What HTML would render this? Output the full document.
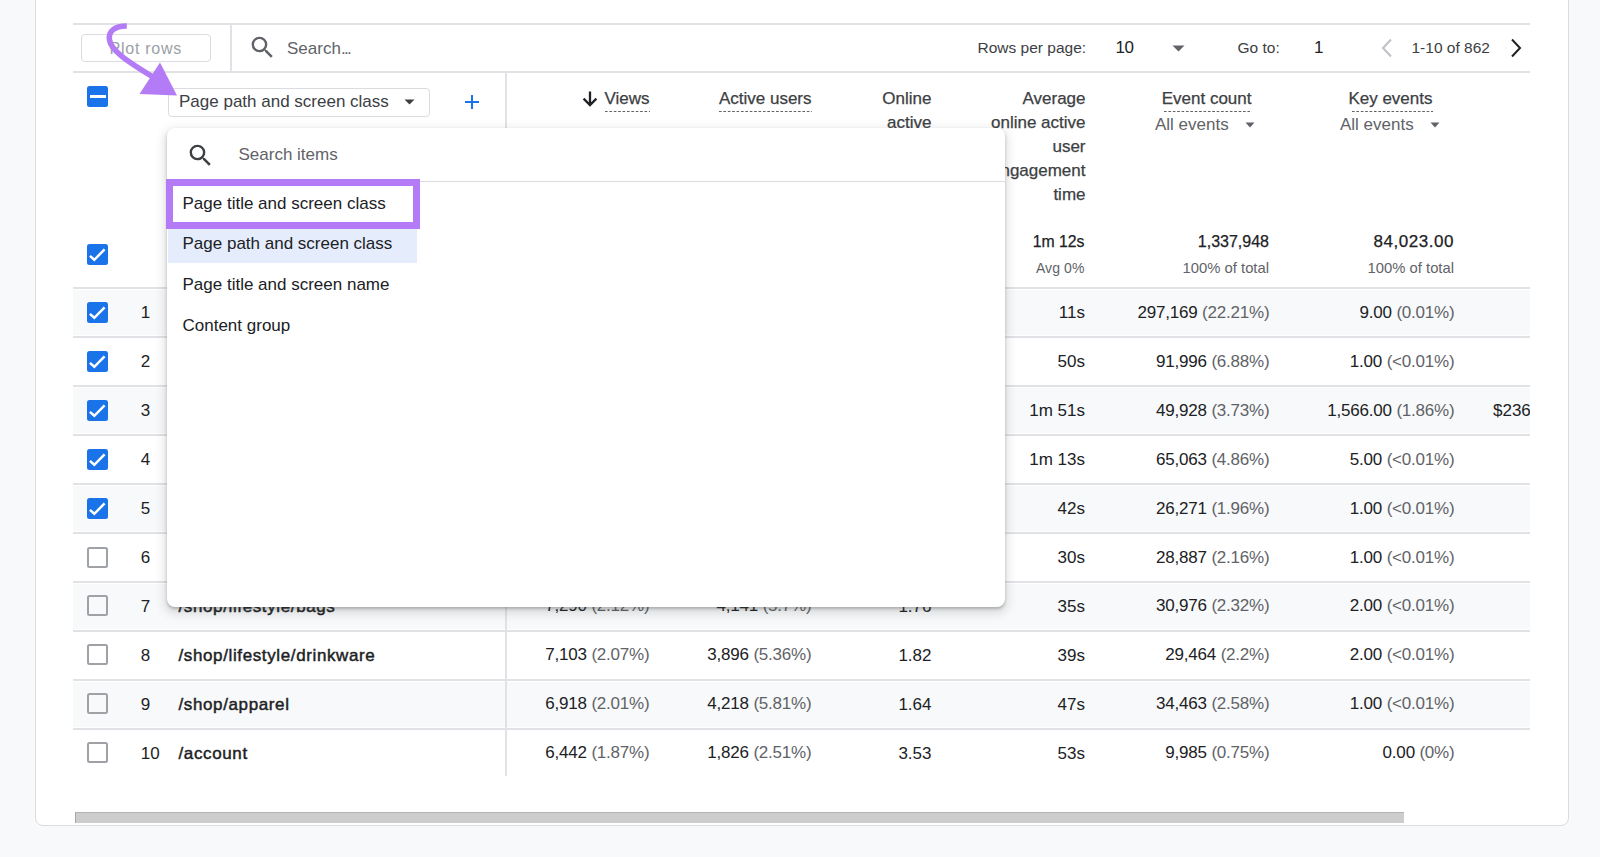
<!DOCTYPE html>
<html><head><meta charset="utf-8"><style>
html,body{margin:0;padding:0;}
body{width:1600px;height:857px;position:relative;overflow:hidden;background:#f8f9fa;font-family:"Liberation Sans", sans-serif;}
.t{position:absolute;white-space:nowrap;}
</style></head><body>
<div style="position:absolute;left:35px;top:-20px;width:1534px;height:846px;box-sizing:border-box;background:#fff;border:1px solid #dadce0;border-radius:8px;"></div>
<div style="position:absolute;left:73px;top:23px;width:1457px;height:2px;background:#e0e2e6;"></div>
<div style="position:absolute;left:73px;top:71px;width:1457px;height:2px;background:#e0e2e6;"></div>
<div style="position:absolute;left:230px;top:25px;width:2px;height:46px;background:#e0e2e6;"></div>
<div style="position:absolute;left:80.5px;top:34px;width:130px;height:28px;box-sizing:border-box;border:1px solid #dadce0;border-radius:4px;"></div>
<div class="t" style="left:109.50px;top:38.96px;font-size:16px;line-height:20px;color:#9aa0a6;font-weight:normal;letter-spacing:0.75px;">Plot rows</div>
<svg style="position:absolute;left:248px;top:33.2px" width="29" height="29" viewBox="0 0 24 24"><path fill="#5f6368" d="M15.5 14h-.79l-.28-.27A6.471 6.471 0 0 0 16 9.5 6.5 6.5 0 1 0 9.5 16c1.61 0 3.09-.59 4.23-1.57l.27.28v.79l5 4.99L20.49 19l-4.99-5zm-6 0C7.01 14 5 11.99 5 9.5S7.01 5 9.5 5 14 7.01 14 9.5 11.99 14 9.5 14z"/></svg>
<div class="t" style="left:287.00px;top:37.61px;font-size:17px;line-height:21px;color:#5f6368;font-weight:normal;">Search<span style="letter-spacing:-1.6px">...</span></div>
<div class="t" style="left:977.50px;top:38.33px;font-size:15.5px;line-height:19px;color:#3c4043;font-weight:normal;">Rows per page:</div>
<div class="t" style="left:1115.50px;top:37.21px;font-size:17px;line-height:21px;color:#202124;font-weight:normal;letter-spacing:-0.4px;">10</div>
<svg style="position:absolute;left:1172px;top:45px" width="13" height="7" viewBox="0 0 13 7"><path d="M0.5 0.5h12L6.5 6.5z" fill="#5f6368"/></svg>
<div class="t" style="left:1237.50px;top:38.33px;font-size:15.5px;line-height:19px;color:#3c4043;font-weight:normal;">Go to:</div>
<div class="t" style="left:1314.00px;top:37.21px;font-size:17px;line-height:21px;color:#202124;font-weight:normal;">1</div>
<svg style="position:absolute;left:1379px;top:38px" width="16" height="20" viewBox="0 0 16 20"><path d="M12 1.5L4 10l8 8.5" fill="none" stroke="#bdc1c6" stroke-width="2"/></svg>
<div class="t" style="left:1411.50px;top:38.33px;font-size:15.5px;line-height:19px;color:#3c4043;font-weight:normal;">1-10 of 862</div>
<svg style="position:absolute;left:1508px;top:38px" width="16" height="20" viewBox="0 0 16 20"><path d="M4 1.5L12 10l-8 8.5" fill="none" stroke="#202124" stroke-width="2"/></svg>
<div style="position:absolute;left:87px;top:86px;width:21px;height:21px;background:#1a73e8;border-radius:2.5px;"></div>
<div style="position:absolute;left:89.5px;top:94.5px;width:16px;height:3px;background:#fff;"></div>
<div style="position:absolute;left:168px;top:88px;width:262px;height:28.5px;box-sizing:border-box;border:1px solid #dadce0;border-radius:4px;background:#fff;"></div>
<div class="t" style="left:179.00px;top:91.21px;font-size:17px;line-height:21px;color:#3c4043;font-weight:normal;">Page path and screen class</div>
<svg style="position:absolute;left:404px;top:99px" width="11" height="6" viewBox="0 0 11 6"><path d="M0.5 0.5h10L5.5 5.5z" fill="#3c4043"/></svg>
<div style="position:absolute;left:465px;top:100.5px;width:14px;height:2px;background:#1a73e8;"></div>
<div style="position:absolute;left:471px;top:94.5px;width:2px;height:14px;background:#1a73e8;"></div>
<div style="position:absolute;left:505px;top:73px;width:2px;height:703px;background:#e0e2e6;"></div>
<svg style="position:absolute;left:581px;top:90px" width="18" height="17" viewBox="0 0 18 17"><path d="M9 1.5V15M2.6 8.6L9 15l6.4-6.4" fill="none" stroke="#202124" stroke-width="2.3"/></svg>
<div class="t" style="right:950.50px;top:87.91px;font-size:17px;line-height:21px;color:#3c4043;font-weight:normal;-webkit-text-stroke:0.25px #3c4043;">Views</div>
<div style="position:absolute;left:604.5px;top:110.5px;width:45.0px;height:1.5px;background-image:linear-gradient(to right,#5f6368 55%,transparent 55%);background-size:4.4px 1.5px;"></div>
<div class="t" style="right:788.50px;top:87.91px;font-size:17px;line-height:21px;color:#3c4043;font-weight:normal;-webkit-text-stroke:0.25px #3c4043;">Active users</div>
<div style="position:absolute;left:719px;top:110.5px;width:92.5px;height:1.5px;background-image:linear-gradient(to right,#5f6368 55%,transparent 55%);background-size:4.4px 1.5px;"></div>
<div class="t" style="right:668.50px;top:87.91px;font-size:17px;line-height:21px;color:#3c4043;font-weight:normal;-webkit-text-stroke:0.25px #3c4043;">Online</div>
<div class="t" style="right:668.50px;top:111.91px;font-size:17px;line-height:21px;color:#3c4043;font-weight:normal;-webkit-text-stroke:0.25px #3c4043;">active</div>
<div class="t" style="right:514.50px;top:87.91px;font-size:17px;line-height:21px;color:#3c4043;font-weight:normal;-webkit-text-stroke:0.25px #3c4043;">Average</div>
<div class="t" style="right:514.50px;top:111.91px;font-size:17px;line-height:21px;color:#3c4043;font-weight:normal;-webkit-text-stroke:0.25px #3c4043;">online active</div>
<div class="t" style="right:514.50px;top:135.91px;font-size:17px;line-height:21px;color:#3c4043;font-weight:normal;-webkit-text-stroke:0.25px #3c4043;">user</div>
<div class="t" style="right:514.50px;top:159.91px;font-size:17px;line-height:21px;color:#3c4043;font-weight:normal;-webkit-text-stroke:0.25px #3c4043;">engagement</div>
<div class="t" style="right:514.50px;top:183.91px;font-size:17px;line-height:21px;color:#3c4043;font-weight:normal;-webkit-text-stroke:0.25px #3c4043;">time</div>
<div class="t" style="right:348.50px;top:87.91px;font-size:17px;line-height:21px;color:#3c4043;font-weight:normal;-webkit-text-stroke:0.25px #3c4043;">Event count</div>
<div style="position:absolute;left:1163.5px;top:110.5px;width:88.0px;height:1.5px;background-image:linear-gradient(to right,#5f6368 55%,transparent 55%);background-size:4.4px 1.5px;"></div>
<div class="t" style="left:1155.00px;top:113.61px;font-size:17px;line-height:21px;color:#5f6368;font-weight:normal;">All events</div>
<svg style="position:absolute;left:1245px;top:122px" width="10" height="6" viewBox="0 0 10 6"><path d="M0.5 0.5h9L5 5.5z" fill="#5f6368"/></svg>
<div class="t" style="right:167.50px;top:87.91px;font-size:17px;line-height:21px;color:#3c4043;font-weight:normal;-webkit-text-stroke:0.25px #3c4043;">Key events</div>
<div style="position:absolute;left:1351.5px;top:110.5px;width:81.0px;height:1.5px;background-image:linear-gradient(to right,#5f6368 55%,transparent 55%);background-size:4.4px 1.5px;"></div>
<div class="t" style="left:1340.00px;top:113.61px;font-size:17px;line-height:21px;color:#5f6368;font-weight:normal;">All events</div>
<svg style="position:absolute;left:1429.5px;top:122px" width="10" height="6" viewBox="0 0 10 6"><path d="M0.5 0.5h9L5 5.5z" fill="#5f6368"/></svg>
<svg style="position:absolute;left:87px;top:244px" width="21" height="21" viewBox="0 0 21 21"><rect x="0" y="0" width="21" height="21" rx="2.5" fill="#1a73e8"/><path d="M2.9 11.9L7.3 15.8L17.6 5.4" fill="none" stroke="#fff" stroke-width="2.5"/></svg>
<div class="t" style="right:515.50px;top:232.23px;font-size:15.8px;line-height:20px;color:#202124;font-weight:normal;-webkit-text-stroke:0.25px #202124;">1m 12s</div>
<div class="t" style="right:515.50px;top:259.15px;font-size:14px;line-height:18px;color:#5f6368;font-weight:normal;letter-spacing:0.1px;">Avg 0%</div>
<div class="t" style="right:331.00px;top:232.16px;font-size:16px;line-height:20px;color:#202124;font-weight:normal;-webkit-text-stroke:0.25px #202124;">1,337,948</div>
<div class="t" style="right:331.00px;top:258.87px;font-size:14.8px;line-height:18px;color:#5f6368;font-weight:normal;">100% of total</div>
<div class="t" style="right:146.00px;top:231.31px;font-size:17px;line-height:21px;color:#202124;font-weight:normal;letter-spacing:0.55px;-webkit-text-stroke:0.25px #202124;">84,023.00</div>
<div class="t" style="right:146.00px;top:258.87px;font-size:14.8px;line-height:18px;color:#5f6368;font-weight:normal;">100% of total</div>
<div style="position:absolute;left:73px;top:290px;width:1457px;height:45px;background:#f8f9fa;"></div>
<div style="position:absolute;left:73px;top:287px;width:1457px;height:2px;background:#e0e2e6;"></div>
<svg style="position:absolute;left:87px;top:302px" width="21" height="21" viewBox="0 0 21 21"><rect x="0" y="0" width="21" height="21" rx="2.5" fill="#1a73e8"/><path d="M2.9 11.9L7.3 15.8L17.6 5.4" fill="none" stroke="#fff" stroke-width="2.5"/></svg>
<div class="t" style="left:140.80px;top:302.41px;font-size:17px;line-height:21px;color:#202124;font-weight:normal;">1</div>
<div class="t" style="right:515.00px;top:302.41px;font-size:17px;line-height:21px;color:#202124;font-weight:normal;">11s</div>
<div class="t" style="right:330.50px;top:302.90px;font-size:17px;line-height:20px;letter-spacing:-0.2px;color:#202124">297,169 <span style="color:#5f6368">(22.21%)</span></div>
<div class="t" style="right:145.50px;top:302.90px;font-size:17px;line-height:20px;letter-spacing:-0.2px;color:#202124">9.00 <span style="color:#5f6368">(0.01%)</span></div>
<div style="position:absolute;left:73px;top:336px;width:1457px;height:2px;background:#e0e2e6;"></div>
<svg style="position:absolute;left:87px;top:351px" width="21" height="21" viewBox="0 0 21 21"><rect x="0" y="0" width="21" height="21" rx="2.5" fill="#1a73e8"/><path d="M2.9 11.9L7.3 15.8L17.6 5.4" fill="none" stroke="#fff" stroke-width="2.5"/></svg>
<div class="t" style="left:140.80px;top:351.34px;font-size:17px;line-height:21px;color:#202124;font-weight:normal;">2</div>
<div class="t" style="right:515.00px;top:351.34px;font-size:17px;line-height:21px;color:#202124;font-weight:normal;">50s</div>
<div class="t" style="right:330.50px;top:351.83px;font-size:17px;line-height:20px;letter-spacing:-0.2px;color:#202124">91,996 <span style="color:#5f6368">(6.88%)</span></div>
<div class="t" style="right:145.50px;top:351.83px;font-size:17px;line-height:20px;letter-spacing:-0.2px;color:#202124">1.00 <span style="color:#5f6368">(&lt;0.01%)</span></div>
<div style="position:absolute;left:73px;top:388px;width:1457px;height:45px;background:#f8f9fa;"></div>
<div style="position:absolute;left:73px;top:385px;width:1457px;height:2px;background:#e0e2e6;"></div>
<svg style="position:absolute;left:87px;top:400px" width="21" height="21" viewBox="0 0 21 21"><rect x="0" y="0" width="21" height="21" rx="2.5" fill="#1a73e8"/><path d="M2.9 11.9L7.3 15.8L17.6 5.4" fill="none" stroke="#fff" stroke-width="2.5"/></svg>
<div class="t" style="left:140.80px;top:400.27px;font-size:17px;line-height:21px;color:#202124;font-weight:normal;">3</div>
<div class="t" style="right:515.00px;top:400.27px;font-size:17px;line-height:21px;color:#202124;font-weight:normal;">1m 51s</div>
<div class="t" style="right:330.50px;top:400.76px;font-size:17px;line-height:20px;letter-spacing:-0.2px;color:#202124">49,928 <span style="color:#5f6368">(3.73%)</span></div>
<div class="t" style="right:145.50px;top:400.76px;font-size:17px;line-height:20px;letter-spacing:-0.2px;color:#202124">1,566.00 <span style="color:#5f6368">(1.86%)</span></div>
<div style="position:absolute;left:1493px;top:400.76px;width:37px;overflow:hidden;font-size:17px;line-height:20px;color:#202124;white-space:nowrap">$236.00</div>
<div style="position:absolute;left:73px;top:434px;width:1457px;height:2px;background:#e0e2e6;"></div>
<svg style="position:absolute;left:87px;top:449px" width="21" height="21" viewBox="0 0 21 21"><rect x="0" y="0" width="21" height="21" rx="2.5" fill="#1a73e8"/><path d="M2.9 11.9L7.3 15.8L17.6 5.4" fill="none" stroke="#fff" stroke-width="2.5"/></svg>
<div class="t" style="left:140.80px;top:449.20px;font-size:17px;line-height:21px;color:#202124;font-weight:normal;">4</div>
<div class="t" style="right:515.00px;top:449.20px;font-size:17px;line-height:21px;color:#202124;font-weight:normal;">1m 13s</div>
<div class="t" style="right:330.50px;top:449.69px;font-size:17px;line-height:20px;letter-spacing:-0.2px;color:#202124">65,063 <span style="color:#5f6368">(4.86%)</span></div>
<div class="t" style="right:145.50px;top:449.69px;font-size:17px;line-height:20px;letter-spacing:-0.2px;color:#202124">5.00 <span style="color:#5f6368">(&lt;0.01%)</span></div>
<div style="position:absolute;left:73px;top:486px;width:1457px;height:45px;background:#f8f9fa;"></div>
<div style="position:absolute;left:73px;top:483px;width:1457px;height:2px;background:#e0e2e6;"></div>
<svg style="position:absolute;left:87px;top:498px" width="21" height="21" viewBox="0 0 21 21"><rect x="0" y="0" width="21" height="21" rx="2.5" fill="#1a73e8"/><path d="M2.9 11.9L7.3 15.8L17.6 5.4" fill="none" stroke="#fff" stroke-width="2.5"/></svg>
<div class="t" style="left:140.80px;top:498.13px;font-size:17px;line-height:21px;color:#202124;font-weight:normal;">5</div>
<div class="t" style="right:515.00px;top:498.13px;font-size:17px;line-height:21px;color:#202124;font-weight:normal;">42s</div>
<div class="t" style="right:330.50px;top:498.62px;font-size:17px;line-height:20px;letter-spacing:-0.2px;color:#202124">26,271 <span style="color:#5f6368">(1.96%)</span></div>
<div class="t" style="right:145.50px;top:498.62px;font-size:17px;line-height:20px;letter-spacing:-0.2px;color:#202124">1.00 <span style="color:#5f6368">(&lt;0.01%)</span></div>
<div style="position:absolute;left:73px;top:532px;width:1457px;height:2px;background:#e0e2e6;"></div>
<div style="position:absolute;left:87px;top:547px;width:21px;height:21px;box-sizing:border-box;border:2px solid #9ea1a5;border-radius:2.5px;"></div>
<div class="t" style="left:140.80px;top:547.06px;font-size:17px;line-height:21px;color:#202124;font-weight:normal;">6</div>
<div class="t" style="right:515.00px;top:547.06px;font-size:17px;line-height:21px;color:#202124;font-weight:normal;">30s</div>
<div class="t" style="right:330.50px;top:547.55px;font-size:17px;line-height:20px;letter-spacing:-0.2px;color:#202124">28,887 <span style="color:#5f6368">(2.16%)</span></div>
<div class="t" style="right:145.50px;top:547.55px;font-size:17px;line-height:20px;letter-spacing:-0.2px;color:#202124">1.00 <span style="color:#5f6368">(&lt;0.01%)</span></div>
<div style="position:absolute;left:73px;top:584px;width:1457px;height:45px;background:#f8f9fa;"></div>
<div style="position:absolute;left:73px;top:581px;width:1457px;height:2px;background:#e0e2e6;"></div>
<div style="position:absolute;left:87px;top:595px;width:21px;height:21px;box-sizing:border-box;border:2px solid #9ea1a5;border-radius:2.5px;"></div>
<div class="t" style="left:140.80px;top:595.99px;font-size:17px;line-height:21px;color:#202124;font-weight:normal;">7</div>
<div class="t" style="left:178.50px;top:595.99px;font-size:17px;line-height:21px;color:#202124;font-weight:normal;letter-spacing:0.62px;-webkit-text-stroke:0.45px #202124;">/shop/lifestyle/bags</div>
<div class="t" style="right:950.50px;top:596.48px;font-size:17px;line-height:20px;letter-spacing:-0.2px;color:#202124">7,290 <span style="color:#5f6368">(2.12%)</span></div>
<div class="t" style="right:788.50px;top:596.48px;font-size:17px;line-height:20px;letter-spacing:-0.2px;color:#202124">4,141 <span style="color:#5f6368">(5.7%)</span></div>
<div class="t" style="right:668.50px;top:595.99px;font-size:17px;line-height:21px;color:#202124;font-weight:normal;">1.76</div>
<div class="t" style="right:515.00px;top:595.99px;font-size:17px;line-height:21px;color:#202124;font-weight:normal;">35s</div>
<div class="t" style="right:330.50px;top:596.48px;font-size:17px;line-height:20px;letter-spacing:-0.2px;color:#202124">30,976 <span style="color:#5f6368">(2.32%)</span></div>
<div class="t" style="right:145.50px;top:596.48px;font-size:17px;line-height:20px;letter-spacing:-0.2px;color:#202124">2.00 <span style="color:#5f6368">(&lt;0.01%)</span></div>
<div style="position:absolute;left:73px;top:630px;width:1457px;height:2px;background:#e0e2e6;"></div>
<div style="position:absolute;left:87px;top:644px;width:21px;height:21px;box-sizing:border-box;border:2px solid #9ea1a5;border-radius:2.5px;"></div>
<div class="t" style="left:140.80px;top:644.92px;font-size:17px;line-height:21px;color:#202124;font-weight:normal;">8</div>
<div class="t" style="left:178.50px;top:644.92px;font-size:17px;line-height:21px;color:#202124;font-weight:normal;letter-spacing:0.62px;-webkit-text-stroke:0.45px #202124;">/shop/lifestyle/drinkware</div>
<div class="t" style="right:950.50px;top:645.41px;font-size:17px;line-height:20px;letter-spacing:-0.2px;color:#202124">7,103 <span style="color:#5f6368">(2.07%)</span></div>
<div class="t" style="right:788.50px;top:645.41px;font-size:17px;line-height:20px;letter-spacing:-0.2px;color:#202124">3,896 <span style="color:#5f6368">(5.36%)</span></div>
<div class="t" style="right:668.50px;top:644.92px;font-size:17px;line-height:21px;color:#202124;font-weight:normal;">1.82</div>
<div class="t" style="right:515.00px;top:644.92px;font-size:17px;line-height:21px;color:#202124;font-weight:normal;">39s</div>
<div class="t" style="right:330.50px;top:645.41px;font-size:17px;line-height:20px;letter-spacing:-0.2px;color:#202124">29,464 <span style="color:#5f6368">(2.2%)</span></div>
<div class="t" style="right:145.50px;top:645.41px;font-size:17px;line-height:20px;letter-spacing:-0.2px;color:#202124">2.00 <span style="color:#5f6368">(&lt;0.01%)</span></div>
<div style="position:absolute;left:73px;top:682px;width:1457px;height:45px;background:#f8f9fa;"></div>
<div style="position:absolute;left:73px;top:679px;width:1457px;height:2px;background:#e0e2e6;"></div>
<div style="position:absolute;left:87px;top:693px;width:21px;height:21px;box-sizing:border-box;border:2px solid #9ea1a5;border-radius:2.5px;"></div>
<div class="t" style="left:140.80px;top:693.85px;font-size:17px;line-height:21px;color:#202124;font-weight:normal;">9</div>
<div class="t" style="left:178.50px;top:693.85px;font-size:17px;line-height:21px;color:#202124;font-weight:normal;letter-spacing:0.62px;-webkit-text-stroke:0.45px #202124;">/shop/apparel</div>
<div class="t" style="right:950.50px;top:694.34px;font-size:17px;line-height:20px;letter-spacing:-0.2px;color:#202124">6,918 <span style="color:#5f6368">(2.01%)</span></div>
<div class="t" style="right:788.50px;top:694.34px;font-size:17px;line-height:20px;letter-spacing:-0.2px;color:#202124">4,218 <span style="color:#5f6368">(5.81%)</span></div>
<div class="t" style="right:668.50px;top:693.85px;font-size:17px;line-height:21px;color:#202124;font-weight:normal;">1.64</div>
<div class="t" style="right:515.00px;top:693.85px;font-size:17px;line-height:21px;color:#202124;font-weight:normal;">47s</div>
<div class="t" style="right:330.50px;top:694.34px;font-size:17px;line-height:20px;letter-spacing:-0.2px;color:#202124">34,463 <span style="color:#5f6368">(2.58%)</span></div>
<div class="t" style="right:145.50px;top:694.34px;font-size:17px;line-height:20px;letter-spacing:-0.2px;color:#202124">1.00 <span style="color:#5f6368">(&lt;0.01%)</span></div>
<div style="position:absolute;left:73px;top:728px;width:1457px;height:2px;background:#e0e2e6;"></div>
<div style="position:absolute;left:87px;top:742px;width:21px;height:21px;box-sizing:border-box;border:2px solid #9ea1a5;border-radius:2.5px;"></div>
<div class="t" style="left:140.80px;top:742.78px;font-size:17px;line-height:21px;color:#202124;font-weight:normal;">10</div>
<div class="t" style="left:178.50px;top:742.78px;font-size:17px;line-height:21px;color:#202124;font-weight:normal;letter-spacing:0.62px;-webkit-text-stroke:0.45px #202124;">/account</div>
<div class="t" style="right:950.50px;top:743.27px;font-size:17px;line-height:20px;letter-spacing:-0.2px;color:#202124">6,442 <span style="color:#5f6368">(1.87%)</span></div>
<div class="t" style="right:788.50px;top:743.27px;font-size:17px;line-height:20px;letter-spacing:-0.2px;color:#202124">1,826 <span style="color:#5f6368">(2.51%)</span></div>
<div class="t" style="right:668.50px;top:742.78px;font-size:17px;line-height:21px;color:#202124;font-weight:normal;">3.53</div>
<div class="t" style="right:515.00px;top:742.78px;font-size:17px;line-height:21px;color:#202124;font-weight:normal;">53s</div>
<div class="t" style="right:330.50px;top:743.27px;font-size:17px;line-height:20px;letter-spacing:-0.2px;color:#202124">9,985 <span style="color:#5f6368">(0.75%)</span></div>
<div class="t" style="right:145.50px;top:743.27px;font-size:17px;line-height:20px;letter-spacing:-0.2px;color:#202124">0.00 <span style="color:#5f6368">(0%)</span></div>
<div style="position:absolute;left:505px;top:73px;width:2px;height:703px;background:#e0e2e6;"></div>
<div style="position:absolute;left:74.5px;top:812px;width:1329px;height:11px;box-sizing:border-box;background:#cdcdcd;border-top:1.5px solid #b3b3b3;border-left:1px solid #a8a8a8;"></div>
<div style="position:absolute;left:167px;top:128px;width:838px;height:479px;background:#fff;border-radius:8px;box-shadow:0 2px 3px rgba(60,64,67,.3),0 4px 10px 3px rgba(60,64,67,.15);"></div>
<svg style="position:absolute;left:185.5px;top:141px" width="29" height="29" viewBox="0 0 24 24"><path fill="#3c4043" d="M15.5 14h-.79l-.28-.27A6.471 6.471 0 0 0 16 9.5 6.5 6.5 0 1 0 9.5 16c1.61 0 3.09-.59 4.23-1.57l.27.28v.79l5 4.99L20.49 19l-4.99-5zm-6 0C7.01 14 5 11.99 5 9.5S7.01 5 9.5 5 14 7.01 14 9.5 11.99 14 9.5 14z"/></svg>
<div class="t" style="left:238.50px;top:144.41px;font-size:17px;line-height:21px;color:#5f6368;font-weight:normal;">Search items</div>
<div style="position:absolute;left:167px;top:180.5px;width:838px;height:1px;background:#dadce0;"></div>
<div style="position:absolute;left:168px;top:229px;width:249px;height:34px;background:#e5edfd;"></div>
<div class="t" style="left:182.50px;top:192.81px;font-size:17px;line-height:21px;color:#202124;font-weight:normal;">Page title and screen class</div>
<div class="t" style="left:182.50px;top:233.48px;font-size:17px;line-height:21px;color:#202124;font-weight:normal;">Page path and screen class</div>
<div class="t" style="left:182.50px;top:274.15px;font-size:17px;line-height:21px;color:#202124;font-weight:normal;">Page title and screen name</div>
<div class="t" style="left:182.50px;top:314.82px;font-size:17px;line-height:21px;color:#202124;font-weight:normal;">Content group</div>
<div style="position:absolute;left:166px;top:178.5px;width:254px;height:50px;box-sizing:border-box;border:7px solid #b37cf6;"></div>
<svg style="position:absolute;left:0;top:0" width="300" height="130" viewBox="0 0 300 130"><path d="M126.8 26 C 115 26, 108 31, 109.5 40 C 111 50, 125 60, 153 77" fill="none" stroke="#b37cf6" stroke-width="5.5"/><path d="M160 62.5 L139.5 94 L177 95.5 Z" fill="#b37cf6"/></svg>
</body></html>
